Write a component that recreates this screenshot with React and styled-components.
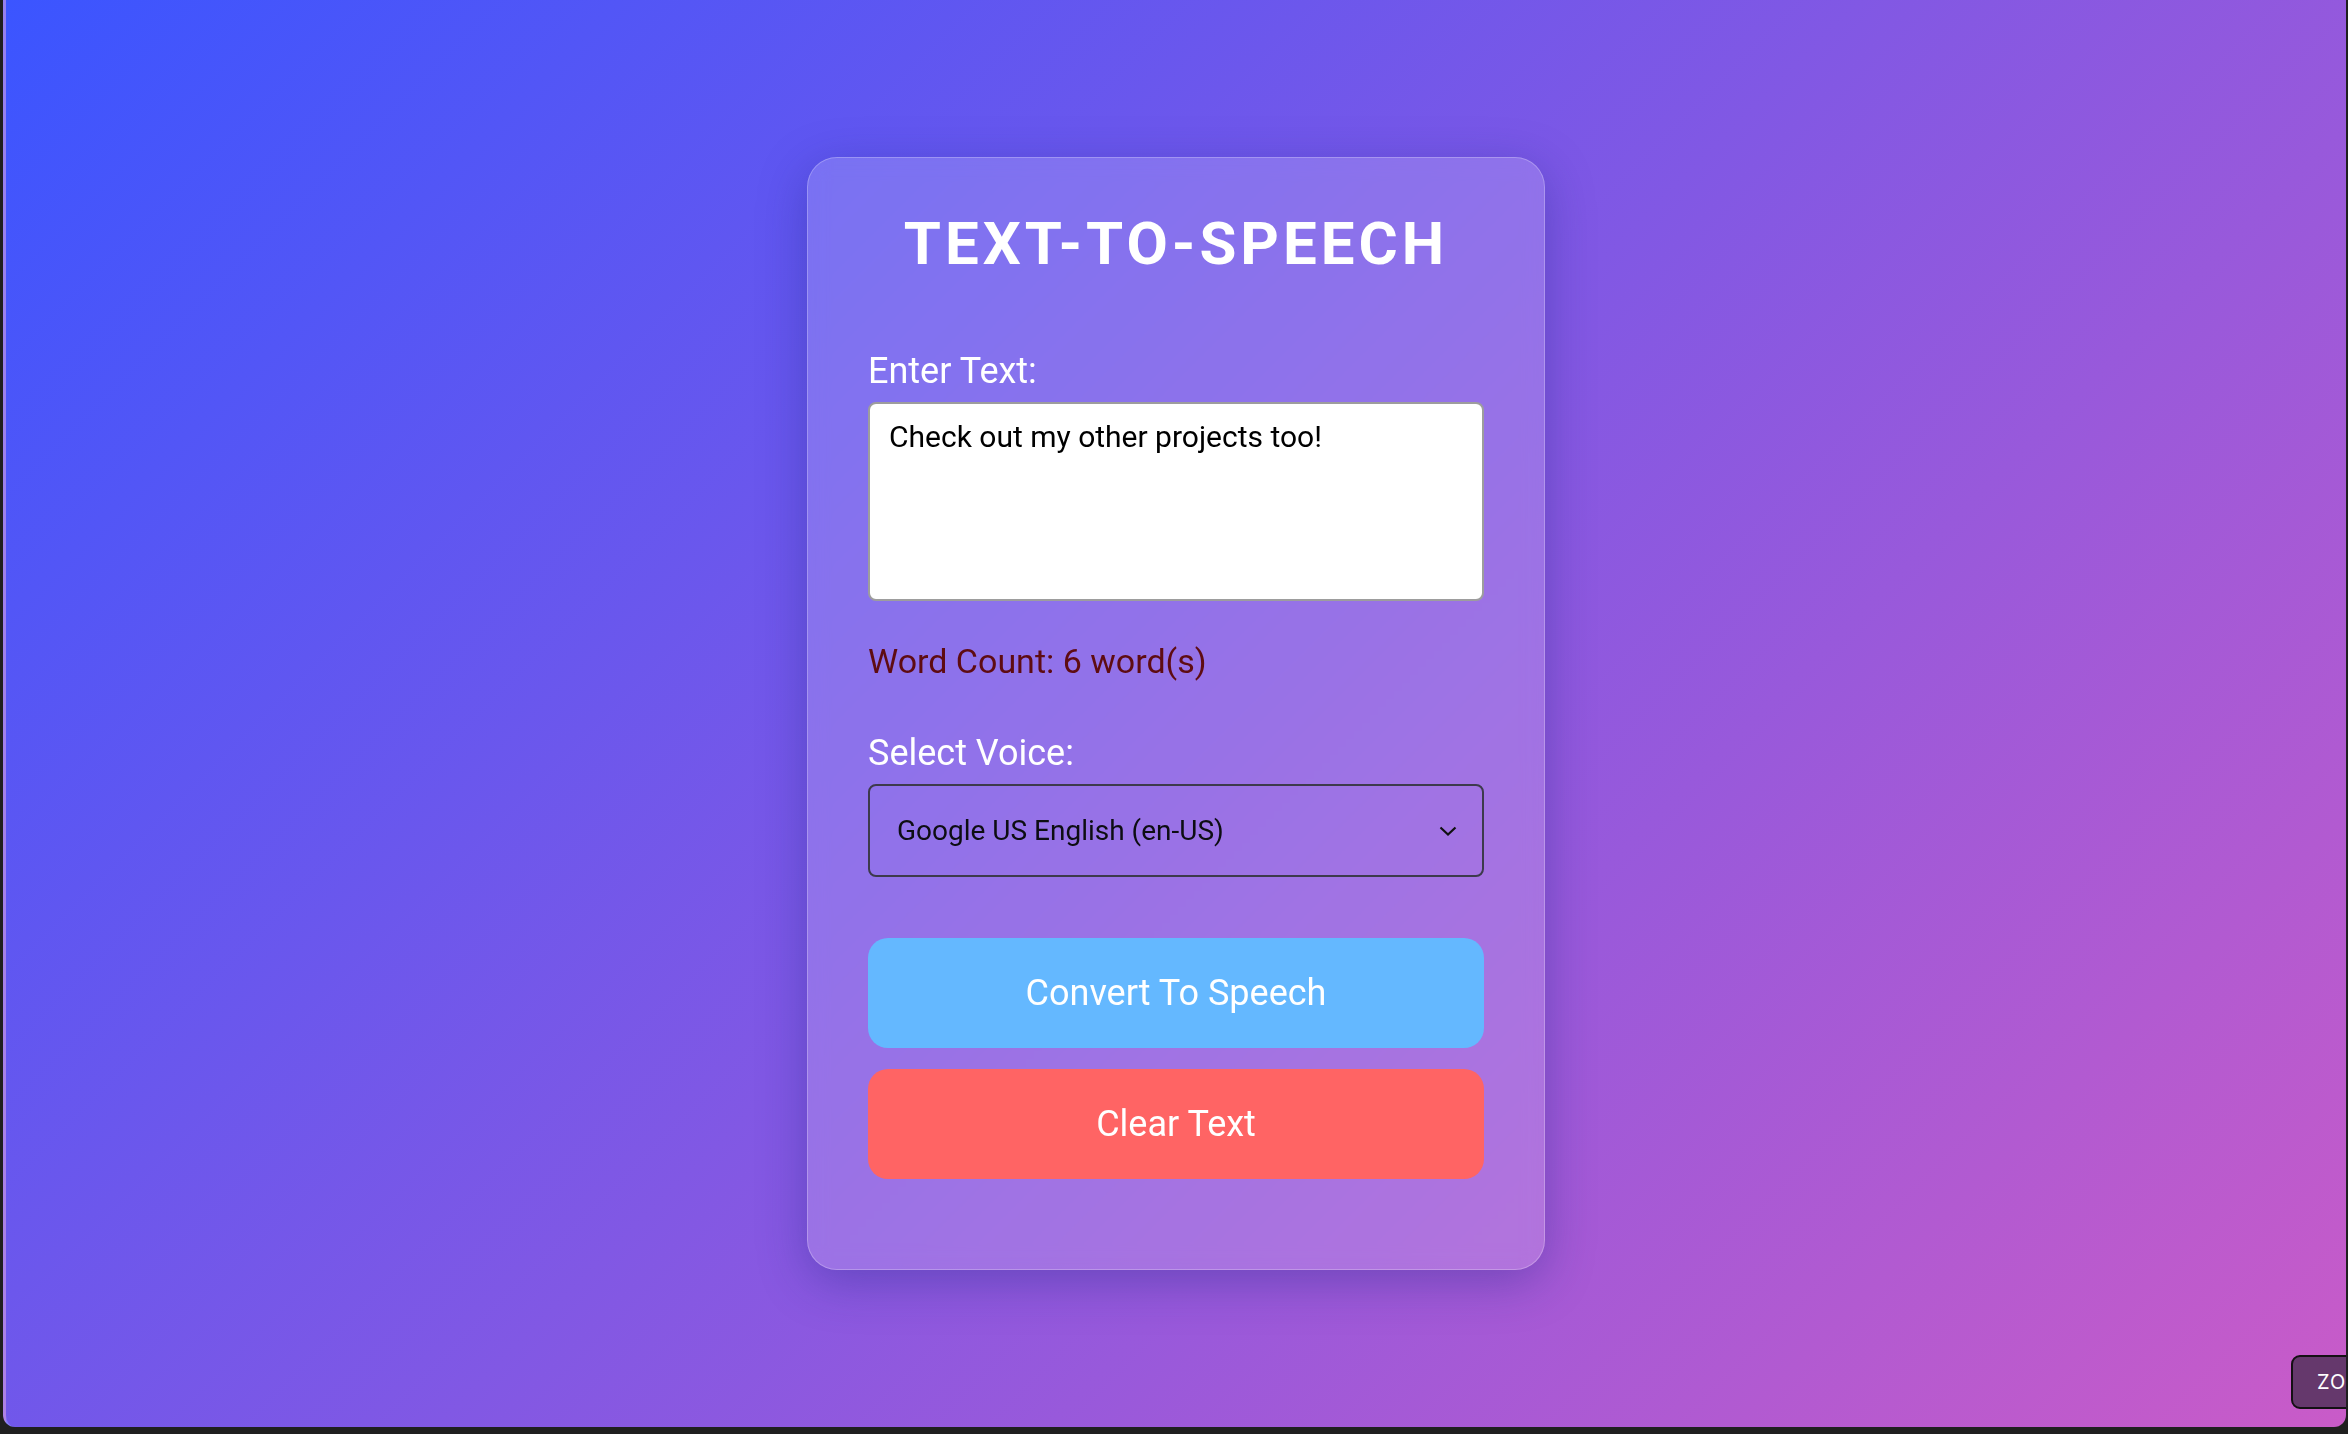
import React, { useEffect, useRef, useState } from "react";
import styled, { createGlobalStyle } from "styled-components";

const GlobalStyle = createGlobalStyle`
  * {
    box-sizing: border-box;
  }
  html,
  body {
    margin: 0;
    padding: 0;
    height: 100%;
    background: #1f1f1f;
    font-family: "Roboto", "Liberation Sans", sans-serif;
  }
  #root {
    height: 100%;
  }
`;

const Screen = styled.div`
  position: relative;
  height: calc(100vh - 7px);
  margin: 0 2px 0 3px;
  border-left: 3px solid rgba(150, 160, 255, 0.55);
  border-radius: 0 0 12px 12px;
  overflow: hidden;
  background: linear-gradient(135deg, #3b55ff 0%, #c95bc8 100%);
  display: flex;
  justify-content: center;
  align-items: center;
`;

const Card = styled.div`
  width: 738px;
  padding: 51px 60px 90px;
  display: flex;
  flex-direction: column;
  background: rgba(255, 255, 255, 0.16);
  border: 1px solid rgba(255, 255, 255, 0.25);
  border-radius: 30px;
  box-shadow: 0 12px 48px rgba(31, 38, 135, 0.37);
  backdrop-filter: blur(10px);
`;

const Title = styled.h1`
  margin: 0;
  font-size: 60px;
  line-height: 70px;
  font-weight: 700;
  letter-spacing: 4px;
  text-align: center;
  color: #ffffff;
`;

const Field = styled.div`
  display: flex;
  flex-direction: column;
  gap: 10px;
  margin-top: ${(p) => p.$top}px;
`;

const Label = styled.label`
  font-size: 36px;
  line-height: 42px;
  color: #ffffff;
`;

const TextArea = styled.textarea`
  width: 100%;
  height: 199px;
  padding: 15px 19px;
  border: 2px solid #9d9d9d;
  border-radius: 8px;
  background: #ffffff;
  color: #000000;
  caret-color: #000000;
  font-family: "Roboto", "Liberation Sans", sans-serif;
  font-size: 30px;
  line-height: 35px;
  resize: none;
  outline: none;
`;

const WordCount = styled.p`
  margin: 39px 0 0;
  font-size: 34px;
  line-height: 42px;
  color: #5e0c12;
`;

const SelectWrap = styled.div`
  position: relative;
  height: 93px;
`;

const Select = styled.select`
  width: 100%;
  height: 100%;
  padding: 0 60px 0 27px;
  border: 2px solid #3d3a4c;
  border-radius: 8px;
  background: transparent;
  color: #0d0d12;
  font-family: "Roboto", "Liberation Sans", sans-serif;
  font-size: 28px;
  appearance: none;
  outline: none;
`;

const Chevron = styled.svg`
  position: absolute;
  right: 27px;
  top: 50%;
  width: 18px;
  height: 10px;
  margin-top: -5px;
  pointer-events: none;
`;

const Actions = styled.div`
  display: flex;
  flex-direction: column;
  gap: 21px;
  margin-top: 61px;
`;

const Button = styled.button`
  height: 110px;
  border: none;
  border-radius: 20px;
  background: ${(p) => (p.$variant === "clear" ? "#ff6464" : "#64b8ff")};
  color: #ffffff;
  font-family: "Roboto", "Liberation Sans", sans-serif;
  font-size: 36px;
  cursor: pointer;
`;

const Badge = styled.div`
  position: absolute;
  left: 2285px;
  top: 1355px;
  width: 110px;
  height: 54px;
  padding-left: 24px;
  display: flex;
  align-items: center;
  border: 2px solid #141014;
  border-radius: 9px;
  background: #65386c;
  color: #ffffff;
  font-family: "Inter", "Noto Sans", sans-serif;
  font-size: 20px;
  letter-spacing: 1px;
`;

const voices = ["Google US English (en-US)", "Google UK English Female (en-GB)"];

const App = () => {
  const [text, setText] = useState("Check out my other projects too!");
  const [voice, setVoice] = useState(voices[0]);
  const ref = useRef(null);

  useEffect(() => {
    const el = ref.current;
    if (el) {
      el.focus();
      el.setSelectionRange(el.value.length, el.value.length);
    }
  }, []);

  const words = text.trim() ? text.trim().split(/\s+/).length : 0;

  return (
    <>
      <GlobalStyle />
      <Screen>
        <Card>
          <Title>TEXT-TO-SPEECH</Title>
          <Field $top={71}>
            <Label htmlFor="text">Enter Text:</Label>
            <TextArea
              id="text"
              ref={ref}
              value={text}
              onChange={(e) => setText(e.target.value)}
            />
          </Field>
          <WordCount>Word Count: {words} word(s)</WordCount>
          <Field $top={50}>
            <Label htmlFor="voice">Select Voice:</Label>
            <SelectWrap>
              <Select
                id="voice"
                value={voice}
                onChange={(e) => setVoice(e.target.value)}
              >
                {voices.map((v) => (
                  <option key={v}>{v}</option>
                ))}
              </Select>
              <Chevron viewBox="0 0 18 10" fill="none">
                <path d="M1.5 1.5 9 8.5l7.5-7" stroke="#111" strokeWidth="2.2" />
              </Chevron>
            </SelectWrap>
          </Field>
          <Actions>
            <Button>Convert To Speech</Button>
            <Button $variant="clear" onClick={() => setText("")}>
              Clear Text
            </Button>
          </Actions>
        </Card>
        <Badge>ZO</Badge>
      </Screen>
    </>
  );
};

export default App;
